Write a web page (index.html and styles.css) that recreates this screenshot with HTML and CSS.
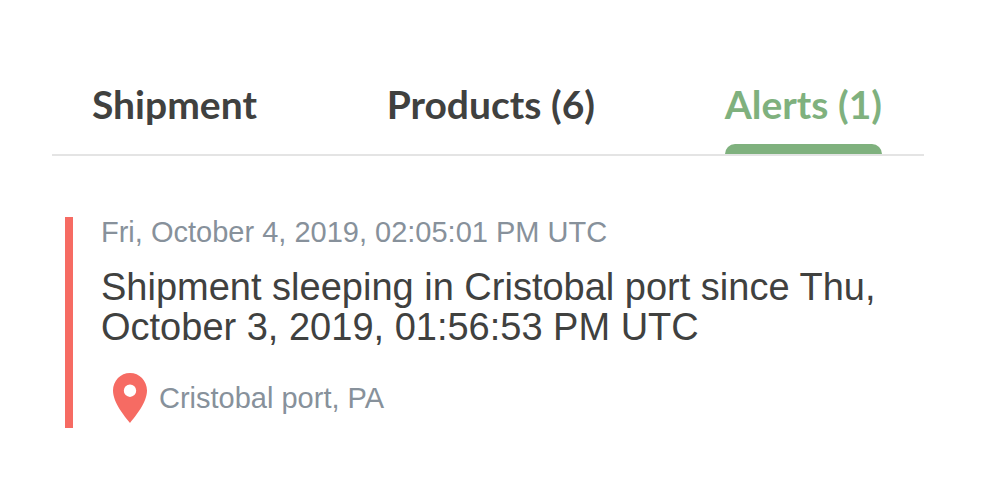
FILE: index.html
```html
<!DOCTYPE html>
<html lang="en">
<head>
<meta charset="utf-8">
<meta name="viewport" content="width=device-width, initial-scale=1">
<title>Shipment alerts</title>
<link rel="stylesheet" href="styles.css">
</head>
<body>
<main class="panel">
  <div class="tabs" role="tablist">
    <button class="tab" role="tab" type="button" aria-selected="false">Shipment</button>
    <button class="tab" role="tab" type="button" aria-selected="false">Products (6)</button>
    <button class="tab tab-active" role="tab" type="button" aria-selected="true">Alerts (1)</button>
  </div>
  <article class="alert">
    <time class="alert-time" datetime="2019-10-04T14:05:01Z">Fri, October 4, 2019, 02:05:01 PM UTC</time>
    <p class="alert-text">Shipment sleeping in Cristobal port since Thu, October 3, 2019, 01:56:53 PM UTC</p>
    <div class="alert-place">
      <svg class="pin" viewBox="0 0 34 50" aria-hidden="true"><path fill-rule="evenodd" d="M17 0C7.600 0 0 7.800 0 17.500C0 29.500 11.500 43 17 50C22.500 43 34 29.500 34 17.500C34 7.800 26.400 0 17 0ZM17 11.500A6.200 6.200 0 1 1 17 23.900A6.200 6.200 0 0 1 17 11.500Z"/></svg>
      <span>Cristobal port, PA</span>
    </div>
  </article>
</main>
</body>
</html>
```
FILE: styles.css
```css
* {
  box-sizing: border-box;
}

body {
  margin: 0;
  background: #fff;
  font-family: "Liberation Sans", Arial, sans-serif;
}

.panel {
  padding: 80px 78px 64px 52px;
}

.tabs {
  display: flex;
  align-items: flex-start;
  justify-content: space-between;
  padding: 0 42px 0 40px;
  border-bottom: 2px solid #e4e4e4;
}

.tab {
  padding: 0;
  border: 0;
  background: none;
  color: #40413f;
  font: 700 39px/48px Lato, sans-serif;
  white-space: nowrap;
}

.tab-active {
  color: #7fb17e;
}

.tab-active::after {
  content: "";
  display: block;
  height: 10px;
  margin-top: 16px;
  border-radius: 10px 10px 0 0;
  background: #7fb17e;
}

.alert {
  margin: 61px 0 0 13px;
  padding: 0 0 5px 28px;
  border-left: 8px solid #f66b63;
}

.alert-time,
.alert-place {
  color: #87919b;
  font-size: 29px;
  line-height: 30px;
}

.alert-time {
  display: block;
}

.alert-text {
  margin: 20px 0 26px;
  color: #40413f;
  font-size: 38px;
  line-height: 40px;
}

.alert-place {
  display: flex;
  align-items: center;
  gap: 12px;
  padding-left: 12px;
}

.pin {
  width: 34px;
  height: 50px;
  fill: #f66b63;
}
```
